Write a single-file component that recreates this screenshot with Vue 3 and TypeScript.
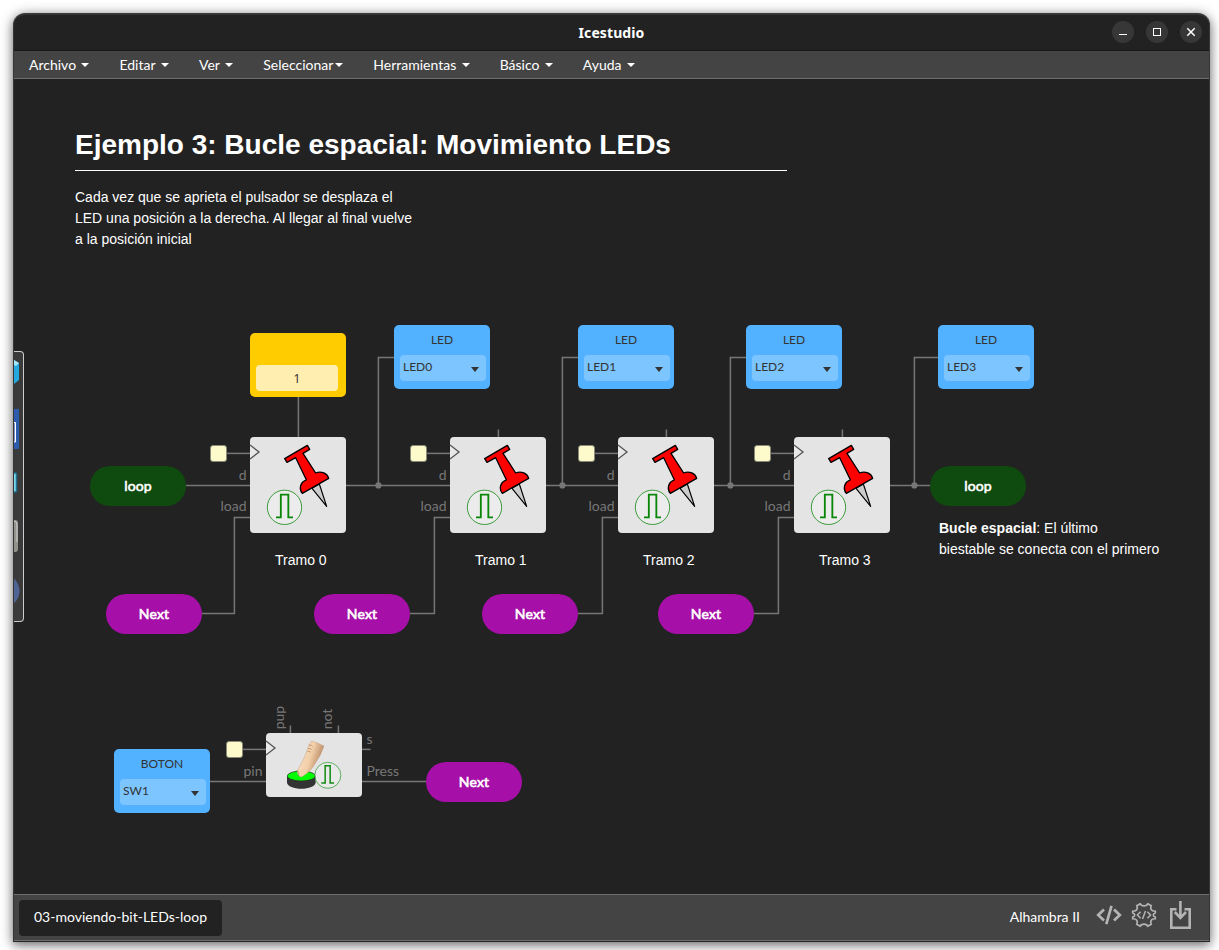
<script setup lang="ts">
interface Point { x: number; y: number }
interface IoBlock extends Point { label: string; value: string }
interface Pill extends Point { text: string; kind: 'loop' | 'next' }

const menus = [
  { text: 'Archivo', tight: false },
  { text: 'Editar', tight: false },
  { text: 'Ver', tight: false },
  { text: 'Seleccionar', tight: true },
  { text: 'Herramientas', tight: false },
  { text: 'Básico', tight: false },
  { text: 'Ayuda', tight: false },
]

const flops: (Point & { title: string })[] = [
  { x: 250, y: 437, title: 'Tramo 0' },
  { x: 450, y: 437, title: 'Tramo 1' },
  { x: 618, y: 437, title: 'Tramo 2' },
  { x: 794, y: 437, title: 'Tramo 3' },
]

const ios: IoBlock[] = [
  { x: 394, y: 325, label: 'LED', value: 'LED0' },
  { x: 578, y: 325, label: 'LED', value: 'LED1' },
  { x: 746, y: 325, label: 'LED', value: 'LED2' },
  { x: 938, y: 325, label: 'LED', value: 'LED3' },
  { x: 114, y: 749, label: 'BOTON', value: 'SW1' },
]

const pills: Pill[] = [
  { x: 90, y: 466, text: 'loop', kind: 'loop' },
  { x: 930, y: 466, text: 'loop', kind: 'loop' },
  { x: 106, y: 594, text: 'Next', kind: 'next' },
  { x: 314, y: 594, text: 'Next', kind: 'next' },
  { x: 482, y: 594, text: 'Next', kind: 'next' },
  { x: 658, y: 594, text: 'Next', kind: 'next' },
  { x: 426, y: 762, text: 'Next', kind: 'next' },
]

const clocks: Point[] = [
  ...flops.map((f) => ({ x: f.x - 40, y: 445 })),
  { x: 226, y: 741 },
]

const junctions = [378.4, 562.4, 730.4, 914.4]

const wires: string[] = [
  'M298.4 397V437',
  'M186 485.4H250',
  'M346 485.4H450',
  'M546 485.4H618',
  'M714 485.4H794',
  'M890 485.4H930',
  'M378.4 485.4V357.4H394',
  'M562.4 485.4V357.4H578',
  'M730.4 485.4V357.4H746',
  'M914.4 485.4V357.4H938',
  'M202 613.4H234.4V517.4H250',
  'M410 613.4H434.4V517.4H450',
  'M578 613.4H602.4V517.4H618',
  'M754 613.4H778.4V517.4H794',
  'M498.4 429.5V437',
  'M666.4 429.5V437',
  'M842.4 429.5V437',
  'M210 781.4H266',
  'M362 781.4H426',
  'M362 749.4H370.5',
  'M290.4 725.5V733',
  'M338.4 725.5V733',
  ...clocks.map((c) => `M${c.x + 16} ${c.y + 8.4}H${c.x + 40}`),
]

const at = (p: Point) => ({ left: `${p.x}px`, top: `${p.y}px` })
</script>

<template>
  <div class="desktop">
    <div class="window">
      <header class="titlebar">
        <span class="app-title">Icestudio</span>
        <div class="controls">
          <svg viewBox="0 0 22 22"><circle cx="11" cy="11" r="11" /><path d="M7 13.5H15" /></svg>
          <svg viewBox="0 0 22 22"><circle cx="11" cy="11" r="11" /><rect x="7.5" y="7.5" width="7" height="7" /></svg>
          <svg viewBox="0 0 22 22"><circle cx="11" cy="11" r="11" /><path d="M7.3 7.3L14.7 14.7M14.7 7.3L7.3 14.7" stroke-width="1.5" /></svg>
        </div>
      </header>

      <nav class="menubar">
        <div v-for="m in menus" :key="m.text" class="menu-item">
          <span>{{ m.text }}</span><i class="caret" :class="{ tight: m.tight }"></i>
        </div>
      </nav>

      <main class="canvas">
        <div class="stage">
          <svg class="wires" width="1219" height="950" viewBox="0 0 1219 950">
            <path v-for="w in wires" :key="w" :d="w" />
            <circle v-for="j in junctions" :key="j" :cx="j" cy="485.4" r="3.1" />
            <template v-for="f in flops" :key="f.x">
              <text :x="f.x - 3.5" y="480" text-anchor="end">d</text>
              <text :x="f.x - 3.5" y="511" text-anchor="end">load</text>
            </template>
            <text x="262.5" y="776" text-anchor="end">pin</text>
            <text x="366.5" y="744">s</text>
            <text x="366.5" y="776">Press</text>
            <text transform="translate(283.6 729.3) rotate(-90)">pup</text>
            <text transform="translate(331.6 729.3) rotate(-90)">not</text>
          </svg>

          <section class="note" :style="at({ x: 75, y: 125 })">
            <h1>Ejemplo 3: Bucle espacial: Movimiento LEDs</h1>
            <p>Cada vez que se aprieta el pulsador se desplaza el<br />LED una posición a la derecha. Al llegar al final vuelve<br />a la posición inicial</p>
          </section>
          <p class="note" :style="at({ x: 939, y: 518 })"><b>Bucle espacial</b>: El último<br />biestable se conecta con el primero</p>

          <div class="constant" :style="at({ x: 250, y: 333 })"><span>1</span></div>

          <div v-for="b in ios" :key="b.value" class="io" :style="at(b)">
            <span class="io-label">{{ b.label }}</span>
            <div class="select"><span>{{ b.value }}</span><i></i></div>
          </div>

          <div v-for="c in clocks" :key="c.x" class="clock" :style="at(c)"></div>

          <template v-for="f in flops" :key="f.title">
            <svg class="block" :style="at(f)" width="96" height="96" viewBox="0 0 288 288">
              <path d="M0 24L27 45L0 66" fill="#e8e8e8" stroke="#555" stroke-width="4" />
              <path d="M186 154L230 208L208 141Z" fill="#ccc" stroke="#000" stroke-width="3.500" stroke-linejoin="round" />
              <path d="M104 65L172 25L179 37L159 49L197 108C214 101 232 109 236 124L157 169C149 161 147 140 165 131L169 128L137 62L111 76Z" fill="#f00" stroke="#000" stroke-width="4" stroke-linejoin="round" />
              <circle cx="103.500" cy="211" r="51.500" fill="#ececec" stroke="#3a9a3a" stroke-width="3" />
              <path d="M78 241H92.500V173H115V241H129" fill="none" stroke="#0a860a" stroke-width="5.500" />
            </svg>
            <p class="note" :style="at({ x: f.x + 25, y: 550 })">{{ f.title }}</p>
          </template>

          <svg class="block" :style="at({ x: 266, y: 733 })" width="96" height="64" viewBox="0 0 288 192">
            <defs>
              <linearGradient id="skin" x1="0" y1="0.2" x2="1" y2="0.6">
                <stop offset="0" stop-color="#f8e2c8" />
                <stop offset="0.5" stop-color="#f2cfa8" />
                <stop offset="1" stop-color="#a97852" />
              </linearGradient>
            </defs>
            <path d="M0 24L27 45L0 66" fill="#e8e8e8" stroke="#555" stroke-width="4" />
            <path d="M63 130V148C63 174 149 174 149 148V130Z" fill="#333" />
            <ellipse cx="106" cy="129" rx="42" ry="15" fill="#0f0" stroke="#222" stroke-width="2" />
            <path d="M137 24Q156 29 174 39Q166 65 148 91Q132 119 107 132C93 130 91 116 98 106Q119 70 128 38Z" fill="url(#skin)" stroke="#b88b66" stroke-width="1" />
            <path d="M129 36Q137 35 140 41M126 46Q134 45 137 51M124 55Q130 54 134 58M94 112Q101 118 98 129" fill="none" stroke="#8e6346" stroke-width="1.500" />
            <circle cx="185.500" cy="127" r="39" fill="#ececec" fill-opacity=".6" stroke="#4aa54a" stroke-width="2.600" />
            <path d="M166 150H177.500V98H192.500V150H204" fill="none" stroke="#108a10" stroke-width="4.500" />
          </svg>

          <div v-for="p in pills" :key="`${p.x}-${p.y}`" class="pill" :class="p.kind" :style="at(p)">{{ p.text }}</div>
        </div>

        <aside class="toolbox">
          <svg width="9" height="269" viewBox="0 0 9 269">
            <path d="M0 8L5 11V28L0 32Z" fill="#24a8df" />
            <path d="M0 8L5 11L2 14L0 13Z" fill="#a8e5f7" />
            <rect x="0" y="57" width="5" height="40" fill="#2d5bae" />
            <path d="M0 70.500H1.500V90H0" fill="#7594cc" stroke="#fff" stroke-width="1" />
            <rect x="-5" y="121" width="7.500" height="19" rx="1" fill="#7ed6ee" stroke="#1c718c" stroke-width="1.500" />
            <rect x="-8" y="168" width="12" height="32" rx="3" fill="#93938e" />
            <path d="M0 169Q3 169 3 173V190" fill="none" stroke="#ccc" stroke-width="1" />
            <circle cx="-11" cy="239" r="16.500" fill="#4e6494" />
          </svg>
        </aside>
      </main>

      <footer class="statusbar">
        <div class="tab">03-moviendo-bit-LEDs-loop</div>
        <div class="board">
          <span>Alhambra II</span>
          <svg class="code" width="26" height="20" viewBox="0 0 26 20" fill="none" stroke="#b4b4b4" stroke-width="2.700">
            <path d="M8 4.500L2.200 10L8 15.500M18 4.500L23.800 10L18 15.500M15.500 .8L10.300 19.200" />
          </svg>
          <svg class="gear" width="26" height="26" viewBox="0 0 26 26" fill="none" stroke="#b4b4b4" stroke-width="1.700">
            <path d="M9.300 1.700Q10 3.800 13 3.800Q16 3.800 16.700 1.700L20.300 3.700Q19 6 20.300 7.800Q21.500 9.500 24.300 9.200V11Q22.300 11.500 22.300 13Q22.300 14.500 24.300 15V16.800Q21.500 16.500 20.300 18.200Q19 20 20.300 22.300L16.700 24.300Q16 22.200 13 22.200Q10 22.200 9.300 24.300L5.700 22.300Q7 20 5.700 18.200Q4.500 16.500 1.700 16.800V15Q3.700 14.500 3.700 13Q3.700 11.500 1.700 11V9.200Q4.500 9.500 5.700 7.800Q7 6 5.700 3.700Z" stroke-linejoin="round" />
            <path d="M9.600 9.800L6.400 13L9.600 16.200M16.400 9.800L19.600 13L16.400 16.200M14.500 9L11.500 17" stroke-width="1.500" />
          </svg>
          <svg class="upload" width="23" height="29" viewBox="0 0 23 29" fill="none" stroke="#b4b4b4" stroke-width="2.600">
            <path d="M7.500 8.300H2.300V26.700H20.700V8.300H15.500M11.400 0V16.500M5.800 11L11.400 16.800L17 11" />
          </svg>
        </div>
      </footer>
    </div>
  </div>
</template>

<style>
body { background: #fff; overflow: hidden; }
</style>

<style scoped>
* { box-sizing: border-box; }
.desktop { width: 1219px; height: 950px; padding: 13px 9px 8px 13px; overflow: hidden; }
.window {
  height: 929px; display: flex; flex-direction: column; overflow: hidden;
  background: #222; border: 1px solid #363636; border-top: 2px solid #373737; border-bottom-color: #292529;
  border-radius: 12px 12px 0 0;
  box-shadow: 0 3px 8px rgba(0, 0, 0, .3), 0 2px 14px rgba(0, 0, 0, .4);
  font: 14px/20px Lato, sans-serif; color: #fff;
}
.titlebar { position: relative; flex: 0 0 36px; display: flex; align-items: center; justify-content: center; border-bottom: 1px solid #181818; }
.app-title { font: bold 14px/20px "Noto Sans", sans-serif; letter-spacing: .1px; }
.controls { position: absolute; right: 7px; top: 6px; display: flex; gap: 12px; }
.controls svg { width: 22px; height: 22px; fill: none; stroke: #fff; }
.controls circle { fill: #373737; stroke: none; }
.menubar { flex: 0 0 28px; display: flex; background: #444; border-bottom: 1px solid #6e6e6e; }
.menu-item { display: flex; align-items: center; padding: 0 15px; }
.caret { margin: 1px 0 0 5.4px; border: 4px solid transparent; border-top-color: #fff; border-bottom: 0; }
.caret.tight { margin-left: 2px; }
.canvas { position: relative; flex: 1; overflow: hidden; }
.stage { position: absolute; left: -14px; top: -79px; width: 1219px; height: 950px; }
.wires { position: absolute; left: 0; top: 0; }
.wires path { fill: none; stroke: #777; stroke-width: 1.5; }
.wires circle { fill: #777; }
.wires text { fill: #777; font: 14px Lato, sans-serif; }
.note { position: absolute; margin: 0; font: 14px/21px "Liberation Sans", Arial, sans-serif; white-space: nowrap; }
.note h1 { width: 712px; height: 46px; margin: 0 0 16px; border-bottom: 1px solid #fff; font-size: 28px; line-height: 39px; }
.note p { margin: 0; }
.block { position: absolute; background: #e4e4e4; border-radius: 4px; }
.constant { position: absolute; width: 96px; height: 64px; padding: 32px 8px 6px 6px; background: #ffcc00; border-radius: 5px; }
.constant span { display: block; height: 26px; background: #ffeeb0; border-radius: 4px; color: #333; font: 12px/27px "Noto Sans", sans-serif; text-align: center; }
.io { position: absolute; width: 96px; height: 64px; background: #53b2ff; border-radius: 5px; color: #333; font-size: 12px; }
.io-label { display: block; height: 30px; line-height: 30px; text-align: center; }
.select { display: flex; justify-content: space-between; height: 26px; margin: 0 4px 0 6px; padding: 0 7px 0 3px; background: #7cc5ff; border-radius: 4px; line-height: 24px; }
.select i { margin-top: 12px; border: 4px solid transparent; border-top: 5px solid #333; border-bottom: 0; height: 0; }
.clock { position: absolute; width: 17px; height: 17px; background: #fdfbcb; border: 1px solid #8a8978; border-radius: 3px; }
.pill { position: absolute; width: 96px; height: 40px; border-radius: 20px; line-height: 40px; text-align: center; -webkit-text-stroke: .6px #fff; letter-spacing: .15px; }
.pill.loop { background: #0f4a0f; }
.pill.next { background: #a60fa8; }
.toolbox { position: absolute; left: 0; top: 272px; width: 10px; height: 271px; background: #3a3a3a; border: 1px solid #ccc; border-left: 0; border-radius: 0 4px 4px 0; }
.toolbox svg { display: block; }
.statusbar { flex: 0 0 47px; display: flex; justify-content: space-between; background: #444; border-top: 1px solid #6e6e6e; border-bottom: 1px solid #6e6e6e; }
.tab { height: 36px; margin: 5px 0 0 5px; padding: 0 15px; background: #222; border-radius: 4px; line-height: 34px; }
.board { display: flex; align-items: flex-start; padding-right: 17px; }
.board span { margin-top: 12px; }
.code { margin: 10px 0 0 16px; }
.gear { margin: 7px 0 0 9px; }
.upload { margin: 6px 0 0 12px; }
</style>
